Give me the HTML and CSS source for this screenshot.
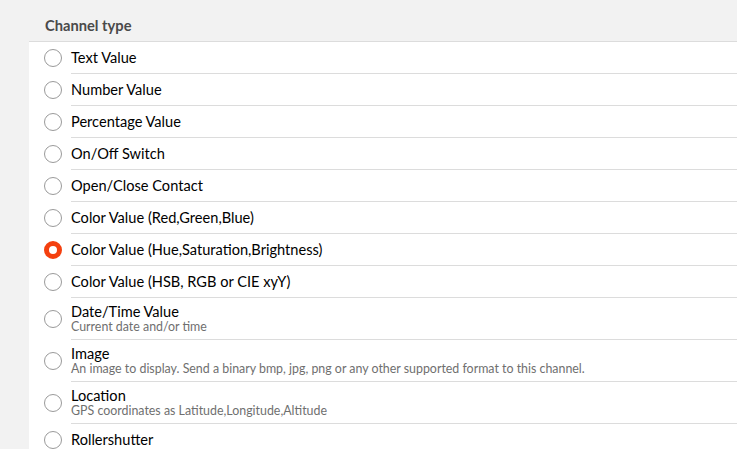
FILE: index.html
```html
<!DOCTYPE html>
<html lang="en">
<head>
    <meta charset="UTF-8">
    <meta name="viewport" content="width=device-width, initial-scale=1.0">
    <title>Channel type</title>
    <link rel="stylesheet" href="styles.css">
</head>
<body>
    <div class="block-title">Channel type</div>

    <ul class="list">
        <li class="item"><span class="radio"></span><div class="inner"><div class="title">Text Value</div></div></li>
        <li class="item"><span class="radio"></span><div class="inner"><div class="title">Number Value</div></div></li>
        <li class="item"><span class="radio"></span><div class="inner"><div class="title">Percentage Value</div></div></li>
        <li class="item"><span class="radio"></span><div class="inner"><div class="title">On/Off Switch</div></div></li>
        <li class="item"><span class="radio"></span><div class="inner"><div class="title">Open/Close Contact</div></div></li>
        <li class="item"><span class="radio"></span><div class="inner"><div class="title">Color Value (Red,Green,Blue)</div></div></li>
        <li class="item"><span class="radio checked"></span><div class="inner"><div class="title">Color Value (Hue,Saturation,Brightness)</div></div></li>
        <li class="item"><span class="radio"></span><div class="inner"><div class="title">Color Value (HSB, RGB or CIE xyY)</div></div></li>
        <li class="item"><span class="radio"></span><div class="inner two-line"><div class="title">Date/Time Value</div><div class="footer">Current date and/or time</div></div></li>
        <li class="item"><span class="radio"></span><div class="inner two-line"><div class="title">Image</div><div class="footer">An image to display. Send a binary bmp, jpg, png or any other supported format to this channel.</div></div></li>
        <li class="item"><span class="radio"></span><div class="inner two-line"><div class="title">Location</div><div class="footer">GPS coordinates as Latitude,Longitude,Altitude</div></div></li>
        <li class="item"><span class="radio"></span><div class="inner"><div class="title">Rollershutter</div></div></li>
    </ul>
</body>
</html>
```
FILE: styles.css
```css
body {
    margin: 0;
    font-family: Lato, "Noto Sans", sans-serif;
    background: #f2f2f2;
    color: #000;
    overflow: hidden;
}

.block-title {
    padding: 16px 0 7px 45px;
    line-height: 18px;
    font-size: 14.7px;
    font-weight: bold;
    color: #4a4a4a;
}

.list {
    list-style: none;
    margin: 0 0 0 29px;
    padding: 0;
    background: #fff;
    border-top: 1px solid #dcdcdc;
}

.item {
    display: flex;
    align-items: center;
    padding-left: 15px;
}

.radio {
    width: 18px;
    height: 18px;
    margin-right: 9px;
    border: 1px solid #9a9a9a;
    border-radius: 50%;
    box-sizing: border-box;
    flex-shrink: 0;
}

.radio.checked {
    border: 5px solid #f4400f;
}

.inner {
    flex: 1;
    height: 31px;
    display: flex;
    flex-direction: column;
    justify-content: center;
    border-bottom: 1px solid #dcdcdc;
}

.inner.two-line {
    height: 41px;
}

.title {
    font-size: 14.6px;
    line-height: 16px;
    white-space: nowrap;
}

.footer {
    font-size: 12.4px;
    line-height: 14px;
    color: #6f6f6f;
    white-space: nowrap;
}
```
